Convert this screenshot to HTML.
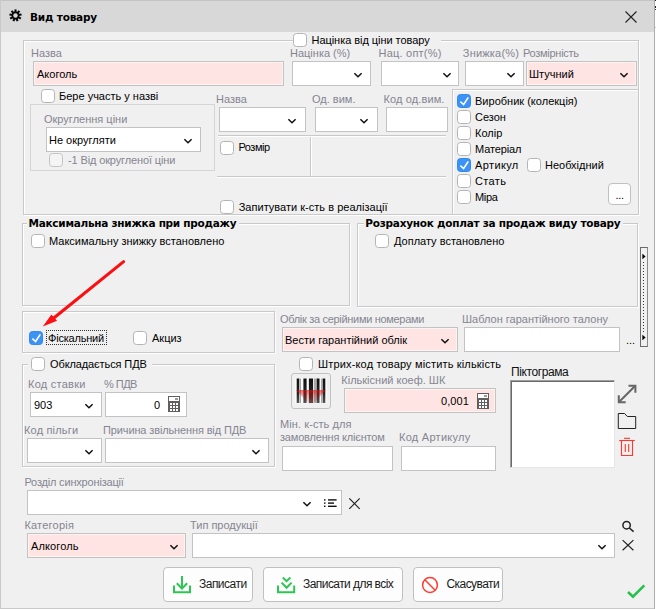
<!DOCTYPE html>
<html lang="uk"><head><meta charset="utf-8"><title>Вид товару</title>
<style>
html,body{margin:0;padding:0;}
body{width:656px;height:609px;overflow:hidden;background:#fff;position:relative;font-family:"Liberation Sans",sans-serif;font-size:11px;color:#000;}
#win{position:absolute;left:0;top:0;width:655px;border-right:1px solid #adadad;height:609px;background:#f0f0f0;overflow:hidden;}
#win,#win *{position:absolute;box-sizing:border-box;}
#tb{left:0;top:0;width:654px;height:32px;background:#d8d8d8;border-top:1px solid #c4c4c4;}
.t{white-space:nowrap;line-height:13px;height:13px;font-size:11px;color:#000;}
.g{color:#858590;}
.b{font-weight:bold;font-size:10.5px;font-family:"DejaVu Sans","Liberation Sans",sans-serif;}
.cb{width:14px;height:14px;background:#fff;border:1px solid #b4b4b4;border-radius:3.5px;}
.cb.on{background:#3d92f6;border-color:#3488ee;}
.cb.dis{background:#f4f4f4;border-color:#c4c4c4;}
.cb svg{left:0;top:0;width:12px;height:12px;}
.in{background:#fff;border:1px solid #c3c3c3;height:25px;}
.in.p{background:#ffe4e4;box-shadow:inset 0 0 0 1px #fdf3f3;}
.chev{width:9px;height:6px;}
.fr{border:1px solid #c9c9c9;box-shadow:1px 1px 0 #fff, inset 1px 1px 0 #fff;}
.pn{border:1px solid #d5d5d5;}
.btn{background:#fdfdfd;border:1px solid #c0c0c0;border-radius:4px;}
.hl{height:1px;background:#c9c9c9;box-shadow:0 1px 0 #fff;}
.vl{width:1px;background:#c9c9c9;box-shadow:1px 0 0 #fff;}
</style></head><body>
<div id="win">
<div id="tb"></div>
<!-- gear -->
<svg style="left:8.9px;top:9.2px;width:13px;height:13px" viewBox="-6.5 -6.5 13 13"><g fill="#0a0a0a"><rect x="-1.05" y="-6.1" width="2.1" height="3.4" transform="rotate(0)"/><rect x="-1.05" y="-6.1" width="2.1" height="3.4" transform="rotate(40)"/><rect x="-1.05" y="-6.1" width="2.1" height="3.4" transform="rotate(80)"/><rect x="-1.05" y="-6.1" width="2.1" height="3.4" transform="rotate(120)"/><rect x="-1.05" y="-6.1" width="2.1" height="3.4" transform="rotate(160)"/><rect x="-1.05" y="-6.1" width="2.1" height="3.4" transform="rotate(200)"/><rect x="-1.05" y="-6.1" width="2.1" height="3.4" transform="rotate(240)"/><rect x="-1.05" y="-6.1" width="2.1" height="3.4" transform="rotate(280)"/><rect x="-1.05" y="-6.1" width="2.1" height="3.4" transform="rotate(320)"/><circle r="3.9"/></g><circle r="2.2" fill="#d8d8d8"/></svg>
<div class="t b" style="left:30px;top:11px;letter-spacing:-0.19px">Вид товару</div>
<svg style="left:625px;top:11px;width:12px;height:12px" viewBox="0 0 12 12"><path d="M0.5 0.5L11.5 11.5M11.5 0.5L0.5 11.5" stroke="#222" stroke-width="1.1" fill="none"/></svg>

<!-- GROUP 1 -->
<div class="fr" style="left:23px;top:40px;width:616px;height:175px"></div>
<div style="left:306px;top:38px;width:135px;height:6px;background:#f0f0f0"></div>
<div class="cb" style="left:293px;top:33px"></div>
<div class="t" style="left:311.5px;top:34px;letter-spacing:-0.05px">Націнка від ціни товару</div>

<div class="t g" style="left:31px;top:47px">Назва</div>
<div class="in p" style="left:33px;top:61px;width:251px"></div>
<div class="t" style="left:37px;top:68px">Акоголь</div>

<div class="t g" style="left:290px;top:47px">Націнка (%)</div>
<div class="in" style="left:292px;top:61px;width:79px"></div>
<div class="t g" style="left:378.5px;top:47px;letter-spacing:0.22px">Нац. опт(%)</div>
<div class="in" style="left:381px;top:61px;width:78px"></div>
<div class="t g" style="left:462.8px;top:47px;letter-spacing:0.2px">Знижка(%)</div>
<div class="in" style="left:465px;top:61px;width:59px"></div>
<div class="t g" style="left:523px;top:47px;letter-spacing:-0.28px">Розмірність</div>
<div class="in p" style="left:526px;top:61px;width:111px"></div>
<div class="t" style="left:529px;top:68px">Штучний</div>

<div class="cb" style="left:41px;top:89px"></div>
<div class="t" style="left:59px;top:90px">Бере участь у назві</div>

<div class="pn" style="left:30px;top:104px;width:185px;height:67px"></div>
<div class="t g" style="left:44px;top:113px">Округлення ціни</div>
<div class="in" style="left:46px;top:127px;width:155px"></div>
<div class="t" style="left:49px;top:134px">Не округляти</div>
<div class="cb dis" style="left:49px;top:153px"></div>
<div class="t g" style="left:68px;top:154px;letter-spacing:-0.13px">-1 Від округленої ціни</div>

<div class="t g" style="left:216px;top:93px">Назва</div>
<div class="in" style="left:219px;top:107px;width:87px"></div>
<div class="t g" style="left:312px;top:93px">Од. вим.</div>
<div class="in" style="left:315px;top:107px;width:63px"></div>
<div class="t g" style="left:383.5px;top:93px;letter-spacing:0.12px">Код од.вим.</div>
<div class="in" style="left:386px;top:107px;width:62px"></div>

<div class="hl" style="left:218px;top:135px;width:228px"></div>
<div class="vl" style="left:310px;top:137px;height:39px"></div>
<div class="hl" style="left:217px;top:176px;width:229px"></div>
<div class="cb" style="left:220px;top:141px"></div>
<div class="t" style="left:238.5px;top:141px;letter-spacing:-0.5px">Розмір</div>
<div class="cb" style="left:220px;top:200px"></div>
<div class="t" style="left:238.7px;top:201px;letter-spacing:0.02px">Запитувати к-сть в реалізації</div>

<div class="fr" style="left:452px;top:89px;width:187px;height:126px"></div>
<div class="cb on" style="left:457px;top:94px"><svg viewBox="0 0 12 12"><path d="M2.4 6.7L5.6 9.5L10.3 2.4" stroke="#fff" stroke-width="1.6" fill="none"/></svg></div>
<div class="t" style="left:475px;top:95px;letter-spacing:0.01px">Виробник (колекція)</div>
<div class="cb" style="left:457px;top:110px"></div>
<div class="t" style="left:475px;top:111px">Сезон</div>
<div class="cb" style="left:457px;top:126px"></div>
<div class="t" style="left:475px;top:127px">Колір</div>
<div class="cb" style="left:457px;top:142px"></div>
<div class="t" style="left:475px;top:143px;letter-spacing:-0.12px">Матеріал</div>
<div class="cb on" style="left:457px;top:158px"><svg viewBox="0 0 12 12"><path d="M2.4 6.7L5.6 9.5L10.3 2.4" stroke="#fff" stroke-width="1.6" fill="none"/></svg></div>
<div class="t" style="left:475px;top:159px;letter-spacing:0.38px">Артикул</div>
<div class="cb" style="left:527px;top:158px"></div>
<div class="t" style="left:545px;top:159px">Необхідний</div>
<div class="cb" style="left:457px;top:174px"></div>
<div class="t" style="left:475px;top:175px;letter-spacing:0.35px">Стать</div>
<div class="cb" style="left:457px;top:190px"></div>
<div class="t" style="left:475px;top:191px;letter-spacing:-0.3px">Міра</div>
<div class="btn" style="left:608px;top:183px;width:23px;height:22px"></div>
<div class="t" style="left:615.5px;top:189px;letter-spacing:-0.3px">...</div>

<!-- GROUP 2 / 3 -->
<div class="fr" style="left:22px;top:223px;width:328px;height:83px"></div>
<div style="left:27px;top:221px;width:212px;height:6px;background:#f0f0f0"></div>
<div class="t b" style="left:28.5px;top:217px;letter-spacing:-0.27px">Максимальна знижка при продажу</div>
<div class="cb" style="left:31px;top:234px"></div>
<div class="t" style="left:49px;top:235px">Максимальну знижку встановлено</div>

<div class="fr" style="left:357px;top:223px;width:281px;height:84px"></div>
<div style="left:364px;top:221px;width:259px;height:6px;background:#f0f0f0"></div>
<div class="t b" style="left:365.3px;top:217px;letter-spacing:-0.25px">Розрахунок доплат за продаж виду товару</div>
<div class="cb" style="left:375px;top:234px"></div>
<div class="t" style="left:394px;top:235px">Доплату встановлено</div>

<!-- arrow -->
<svg style="left:30px;top:250px;width:110px;height:90px;z-index:5" viewBox="30 250 110 90"><path d="M123.6 261.6L53.5 318.2" stroke="#fb0f12" stroke-width="3.1" fill="none" stroke-linecap="round"/><path d="M42.8 326.4L51.4 314.4L57.1 320.7Z" fill="#fb0f12"/></svg>

<!-- fiscal panel -->
<div class="fr" style="left:22px;top:311px;width:253px;height:42px"></div>
<div class="cb on" style="left:29px;top:331px"><svg viewBox="0 0 12 12"><path d="M2.4 6.7L5.6 9.5L10.3 2.4" stroke="#fff" stroke-width="1.6" fill="none"/></svg></div>
<div class="t" style="left:48px;top:332px;letter-spacing:-0.2px">Фіскальний</div>
<div style="left:46px;top:330px;width:61px;height:15px;border:1px dotted #333"></div>
<div class="cb" style="left:133px;top:331px"></div>
<div class="t" style="left:152px;top:332px">Акциз</div>

<div class="t g" style="left:280px;top:313px;letter-spacing:-0.31px">Облік за серійними номерами</div>
<div class="in p" style="left:282px;top:327px;width:176px"></div>
<div class="t" style="left:285px;top:334px">Вести гарантійний облік</div>
<div class="t g" style="left:462px;top:313px">Шаблон гарантійного талону</div>
<div class="in" style="left:464px;top:327px;width:156px"></div>
<div class="t" style="left:626px;top:334px">...</div>

<!-- splitter -->
<div style="left:640px;top:247px;width:8px;height:100px;border:1px solid #6a6a6a;border-right-color:#8a8a8a"></div>
<div style="left:643px;top:262px;width:1px;height:70px;background:repeating-linear-gradient(to bottom,#333 0,#333 1px,transparent 1px,transparent 3px)"></div>
<svg style="left:642px;top:253px;width:4px;height:7px" viewBox="0 0 5 8"><path d="M0.5 0.5L4.5 4L0.5 7.5Z" fill="#000"/></svg>
<svg style="left:642px;top:334px;width:4px;height:7px" viewBox="0 0 5 8"><path d="M0.5 0.5L4.5 4L0.5 7.5Z" fill="#000"/></svg>

<!-- PDV group -->
<div class="fr" style="left:22px;top:364px;width:253px;height:103px"></div>
<div style="left:28px;top:362px;width:124px;height:6px;background:#f0f0f0"></div>
<div class="cb" style="left:31px;top:357px"></div>
<div class="t" style="left:50px;top:358px;letter-spacing:-0.11px">Обкладається ПДВ</div>
<div class="t g" style="left:28px;top:378px;letter-spacing:0.25px">Код ставки</div>
<div class="t g" style="left:104px;top:378px;letter-spacing:-0.52px">% ПДВ</div>
<div class="in" style="left:30px;top:392px;width:72px;height:25px"></div>
<div class="t" style="left:34px;top:399px">903</div>
<div class="in" style="left:105px;top:392px;width:82px;height:25px"></div>
<div class="t" style="left:140px;top:399px;width:20px;text-align:right">0</div>
<div class="t g" style="left:24px;top:424px;letter-spacing:0.18px">Код пільги</div>
<div class="t g" style="left:103px;top:424px;letter-spacing:-0.13px">Причина звільнення від ПДВ</div>
<div class="in" style="left:27px;top:438px;width:75px;height:25px"></div>
<div class="in" style="left:105px;top:438px;width:164px;height:25px"></div>

<!-- barcode area -->
<div class="cb" style="left:299px;top:357px"></div>
<div class="t" style="left:318px;top:358px;letter-spacing:0.16px">Штрих-код товару містить кількість</div>
<div class="btn" style="left:291px;top:373px;width:40px;height:36px;background:#f0f0f0;border-color:#c2c2c2;border-radius:3px"></div>
<div class="t g" style="left:341.3px;top:374px">Кількісний коеф. ШК</div>
<div class="in p" style="left:344px;top:388px;width:152px"></div>
<div class="t" style="left:420px;top:395px;width:49px;text-align:right;letter-spacing:0.1px">0,001</div>
<div class="t g" style="left:280px;top:418px;letter-spacing:0.09px">Мін. к-сть для</div>
<div class="t g" style="left:280px;top:431px;letter-spacing:-0.19px">замовлення клієнтом</div>
<div class="t g" style="left:399px;top:431px;letter-spacing:0.27px">Код Артикулу</div>
<div class="in" style="left:282px;top:446px;width:111px"></div>
<div class="in" style="left:401px;top:446px;width:95px"></div>

<div class="t" style="left:511px;top:366px;font-size:12px;letter-spacing:-0.4px;color:#111">Піктограма</div>
<div style="left:510px;top:380px;width:105px;height:88px;background:#fff;border-top:1px solid #a0a0a0;border-left:1px solid #a0a0a0;border-right:1px solid #e6e6e6;border-bottom:1px solid #e6e6e6;box-shadow:inset 1px 1px 0 #696969"></div>

<!-- bottom -->
<div class="t g" style="left:24.4px;top:476px;letter-spacing:-0.18px">Розділ синхронізації</div>
<div class="in" style="left:27px;top:490px;width:315px"></div>
<div class="t g" style="left:24.4px;top:519px;letter-spacing:0.22px">Категорія</div>
<div class="in p" style="left:27px;top:533px;width:159px"></div>
<div class="t" style="left:31px;top:540px;letter-spacing:0.13px">Алкоголь</div>
<div class="t g" style="left:190px;top:519px">Тип продукції</div>
<div class="in" style="left:192px;top:533px;width:423px"></div>

<div class="btn" style="left:163px;top:567px;width:90px;height:35px"></div>
<div class="t" style="left:199px;top:578px;font-size:12px;letter-spacing:-0.52px;color:#1a1a1a">Записати</div>
<div class="btn" style="left:263px;top:567px;width:140px;height:35px"></div>
<div class="t" style="left:303px;top:578px;font-size:12px;letter-spacing:-0.56px;color:#1a1a1a">Записати для всіх</div>
<div class="btn" style="left:413px;top:567px;width:90px;height:35px"></div>
<div class="t" style="left:446.5px;top:578px;font-size:12px;letter-spacing:-0.57px;color:#1a1a1a">Скасувати</div>


<svg style="left:352.4px;top:70.6px;width:12px;height:8px" viewBox="0 0 12 8"><path d="M2.4 2.2L6 5.8L9.6 2.2" stroke="#111" stroke-width="1.5" fill="none"/></svg>
<svg style="left:441.4px;top:70.6px;width:12px;height:8px" viewBox="0 0 12 8"><path d="M2.4 2.2L6 5.8L9.6 2.2" stroke="#111" stroke-width="1.5" fill="none"/></svg>
<svg style="left:505.4px;top:70.6px;width:12px;height:8px" viewBox="0 0 12 8"><path d="M2.4 2.2L6 5.8L9.6 2.2" stroke="#111" stroke-width="1.5" fill="none"/></svg>
<svg style="left:618.4px;top:70.6px;width:12px;height:8px" viewBox="0 0 12 8"><path d="M2.4 2.2L6 5.8L9.6 2.2" stroke="#111" stroke-width="1.5" fill="none"/></svg>
<svg style="left:182.4px;top:136.6px;width:12px;height:8px" viewBox="0 0 12 8"><path d="M2.4 2.2L6 5.8L9.6 2.2" stroke="#111" stroke-width="1.5" fill="none"/></svg>
<svg style="left:286.4px;top:116.6px;width:12px;height:8px" viewBox="0 0 12 8"><path d="M2.4 2.2L6 5.8L9.6 2.2" stroke="#111" stroke-width="1.5" fill="none"/></svg>
<svg style="left:358.4px;top:116.6px;width:12px;height:8px" viewBox="0 0 12 8"><path d="M2.4 2.2L6 5.8L9.6 2.2" stroke="#111" stroke-width="1.5" fill="none"/></svg>
<svg style="left:83.4px;top:401.6px;width:12px;height:8px" viewBox="0 0 12 8"><path d="M2.4 2.2L6 5.8L9.6 2.2" stroke="#111" stroke-width="1.5" fill="none"/></svg>
<svg style="left:83.4px;top:447.6px;width:12px;height:8px" viewBox="0 0 12 8"><path d="M2.4 2.2L6 5.8L9.6 2.2" stroke="#111" stroke-width="1.5" fill="none"/></svg>
<svg style="left:250.4px;top:447.6px;width:12px;height:8px" viewBox="0 0 12 8"><path d="M2.4 2.2L6 5.8L9.6 2.2" stroke="#111" stroke-width="1.5" fill="none"/></svg>
<svg style="left:439.4px;top:336.6px;width:12px;height:8px" viewBox="0 0 12 8"><path d="M2.4 2.2L6 5.8L9.6 2.2" stroke="#111" stroke-width="1.5" fill="none"/></svg>
<svg style="left:301.4px;top:499.6px;width:12px;height:8px" viewBox="0 0 12 8"><path d="M2.4 2.2L6 5.8L9.6 2.2" stroke="#111" stroke-width="1.5" fill="none"/></svg>
<svg style="left:167.5px;top:542.6px;width:12px;height:8px" viewBox="0 0 12 8"><path d="M2.4 2.2L6 5.8L9.6 2.2" stroke="#111" stroke-width="1.5" fill="none"/></svg>
<svg style="left:596.4px;top:542.6px;width:12px;height:8px" viewBox="0 0 12 8"><path d="M2.4 2.2L6 5.8L9.6 2.2" stroke="#111" stroke-width="1.5" fill="none"/></svg>
<!-- calculator icons -->
<svg style="left:168px;top:396px;width:12px;height:16px" viewBox="0 0 12 16"><rect width="12" height="16" fill="#5f5f5f"/><rect x="1" y="1" width="10" height="4" fill="#fff"/><rect x="7" y="2" width="3" height="2" fill="#9a9a9a"/><g fill="#fff"><rect x="2" y="7" width="2" height="2"/><rect x="5" y="7" width="2" height="2"/><rect x="8" y="7" width="2" height="2"/><rect x="2" y="10" width="2" height="2"/><rect x="5" y="10" width="2" height="2"/><rect x="8" y="10" width="2" height="2"/><rect x="2" y="13" width="2" height="2"/><rect x="5" y="13" width="2" height="2"/><rect x="8" y="13" width="2" height="2"/></g></svg>
<svg style="left:477px;top:393px;width:12px;height:16px" viewBox="0 0 12 16"><rect width="12" height="16" fill="#5f5f5f"/><rect x="1" y="1" width="10" height="4" fill="#fff"/><rect x="7" y="2" width="3" height="2" fill="#9a9a9a"/><g fill="#fff"><rect x="2" y="7" width="2" height="2"/><rect x="5" y="7" width="2" height="2"/><rect x="8" y="7" width="2" height="2"/><rect x="2" y="10" width="2" height="2"/><rect x="5" y="10" width="2" height="2"/><rect x="8" y="10" width="2" height="2"/><rect x="2" y="13" width="2" height="2"/><rect x="5" y="13" width="2" height="2"/><rect x="8" y="13" width="2" height="2"/></g></svg>
<!-- barcode -->
<svg style="left:295px;top:378px;width:32px;height:26px" viewBox="295 378 32 26"><defs><linearGradient id="bg1" x1="0" y1="0" x2="0" y2="1"><stop offset="0" stop-color="#111"/><stop offset="0.6" stop-color="#222"/><stop offset="1" stop-color="#555"/></linearGradient><linearGradient id="bg2" x1="0" y1="0" x2="0" y2="1"><stop offset="0" stop-color="#e01010" stop-opacity="0.62"/><stop offset="0.45" stop-color="#d01010" stop-opacity="0.3"/><stop offset="1" stop-color="#c01010" stop-opacity="0.12"/></linearGradient></defs><rect x="295" y="378" width="32" height="25.5" fill="#fafafa"/><g fill="url(#bg1)"><rect x="296.7" y="378.5" width="2.6" height="24.5"/><rect x="303.4" y="378.5" width="3.2" height="24.5"/><rect x="308.9" y="378.5" width="4.1" height="24.5"/><rect x="316.5" y="378.5" width="3" height="24.5"/><rect x="322.6" y="378.5" width="2.7" height="24.5"/></g><g fill="#999"><rect x="300.1" y="378.5" width="0.9" height="24.5"/><rect x="313.8" y="378.5" width="2.7" height="24.5" fill="#aaa"/><rect x="321" y="378.5" width="0.8" height="24.5"/></g><path d="M296 390H326L313.5 403.4H308.5Z" fill="url(#bg2)"/></svg>
<!-- expand -->
<svg style="left:617px;top:384px;width:21px;height:20px" viewBox="617 384 21 20"><g stroke="#666" stroke-width="2" fill="none"><path d="M619.5 401.5L634.8 386.2"/><path d="M628.5 385.8H635.4V392.7"/><path d="M618.8 395.3V402.2H625.7"/></g></svg>
<!-- folder -->
<svg style="left:617px;top:412px;width:21px;height:18px" viewBox="617 412 21 18"><path d="M618.3 413.5H624.6L627.3 416.5H635.7V428.5H618.3Z" stroke="#222" stroke-width="1" fill="none"/></svg>
<!-- trash -->
<svg style="left:618px;top:437px;width:18px;height:20px" viewBox="618 437 18 20"><g stroke="#fa3a2f" stroke-width="1.1" fill="none"><path d="M624 438.3H630"/><path d="M619.2 440.5H634.8"/><path d="M621.5 440.5V455.5H632.5V440.5"/><path d="M625.3 444V452M628.7 444V452"/></g></svg>
<!-- list icon -->
<svg style="left:323px;top:498px;width:15px;height:10px" viewBox="323 498 15 10"><g fill="#111"><rect x="324" y="499.2" width="1.5" height="1.4"/><rect x="324" y="502.4" width="1.5" height="1.4"/><rect x="324" y="505.6" width="1.5" height="1.4"/><rect x="328" y="499.2" width="8.6" height="1.4"/><rect x="328" y="502.4" width="6" height="1.4"/><rect x="328" y="505.6" width="8.6" height="1.4"/></g></svg>
<!-- X icons -->
<svg style="left:348px;top:497px;width:13px;height:13px" viewBox="348 497 13 13"><path d="M349.3 498.4L359.7 508.8M359.7 498.4L349.3 508.8" stroke="#222" stroke-width="1.2" fill="none"/></svg>
<svg style="left:621px;top:539px;width:14px;height:13px" viewBox="621 539 14 13"><path d="M622.6 540.1L633.4 550.3M633.4 540.1L622.6 550.3" stroke="#222" stroke-width="1.2" fill="none"/></svg>
<!-- search -->
<svg style="left:621px;top:519px;width:15px;height:14px" viewBox="621 519 15 14"><circle cx="626.6" cy="525.2" r="3.7" stroke="#222" stroke-width="1.5" fill="none"/><path d="M629.3 528L633.6 531.6" stroke="#222" stroke-width="1.6" fill="none"/></svg>
<!-- green check -->
<svg style="left:625px;top:583px;width:22px;height:16px" viewBox="625 583 22 16"><path d="M628 592L633 596.7L644.3 585.4" stroke="#27c04c" stroke-width="2.6" fill="none"/></svg>
<!-- button icons -->
<svg style="left:171px;top:574px;width:22px;height:22px" viewBox="171 574 22 22"><g stroke="#2cc653" stroke-width="2" fill="none"><path d="M174 585.5V592.3H190V585.5"/><path d="M182 576V588.5"/><path d="M176.8 583.2L182 588.5L187.2 583.2"/></g></svg>
<svg style="left:275px;top:574px;width:22px;height:22px" viewBox="275 574 22 22"><g stroke="#2cc653" stroke-width="2" fill="none"><path d="M278 585.5V592.3H294.2V585.5"/><path d="M282.8 577.6L286.6 581.2L290.4 577.6"/><path d="M281.6 582.6L286.6 587.8L291.6 582.6"/></g></svg>
<svg style="left:420px;top:575px;width:20px;height:20px" viewBox="420 575 20 20"><g stroke="#ff3b30" stroke-width="1.5" fill="none"><circle cx="430" cy="585" r="7.4"/><path d="M424.8 579.8L435.2 590.2"/></g></svg>
<div style="left:0;top:0;width:1px;height:609px;background:#c9c9c9"></div>
<div style="left:0;top:608px;width:654px;height:1px;background:#c9c9c9"></div>

</div>
<div style="position:absolute;left:655px;top:0;width:1px;height:1px;background:#222"></div><div style="position:absolute;left:655px;top:6px;width:1px;height:2px;background:#222"></div><div style="position:absolute;left:655px;top:9px;width:1px;height:1px;background:#333"></div><div style="position:absolute;left:655px;top:27px;width:1px;height:1px;background:#ccc"></div>
</body></html>
